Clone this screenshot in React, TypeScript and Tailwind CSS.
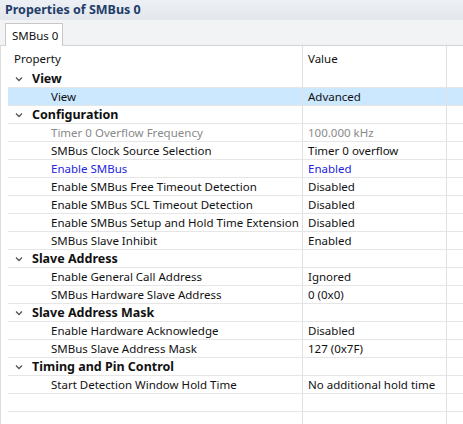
import React from "react";

type Row =
  | { kind: "cat"; label: string }
  | { kind: "item"; label: string; value: string; tone?: "gray" | "blue"; selected?: boolean }
  | { kind: "empty" };

const rows: Row[] = [
  { kind: "cat", label: "View" },
  { kind: "item", label: "View", value: "Advanced", selected: true },
  { kind: "cat", label: "Configuration" },
  { kind: "item", label: "Timer 0 Overflow Frequency", value: "100.000 kHz", tone: "gray" },
  { kind: "item", label: "SMBus Clock Source Selection", value: "Timer 0 overflow" },
  { kind: "item", label: "Enable SMBus", value: "Enabled", tone: "blue" },
  { kind: "item", label: "Enable SMBus Free Timeout Detection", value: "Disabled" },
  { kind: "item", label: "Enable SMBus SCL Timeout Detection", value: "Disabled" },
  { kind: "item", label: "Enable SMBus Setup and Hold Time Extension", value: "Disabled" },
  { kind: "item", label: "SMBus Slave Inhibit", value: "Enabled" },
  { kind: "cat", label: "Slave Address" },
  { kind: "item", label: "Enable General Call Address", value: "Ignored" },
  { kind: "item", label: "SMBus Hardware Slave Address", value: "0 (0x0)" },
  { kind: "cat", label: "Slave Address Mask" },
  { kind: "item", label: "Enable Hardware Acknowledge", value: "Disabled" },
  { kind: "item", label: "SMBus Slave Address Mask", value: "127 (0x7F)" },
  { kind: "cat", label: "Timing and Pin Control" },
  { kind: "item", label: "Start Detection Window Hold Time", value: "No additional hold time" },
  { kind: "empty" },
  { kind: "empty" },
];

function Chevron() {
  return (
    <svg width="8" height="6" viewBox="0 0 8 6" className="mr-[9px] ml-[7px] shrink-0">
      <path d="M1 1.5 L4 4.5 L7 1.5" fill="none" stroke="#555" strokeWidth="1.3" />
    </svg>
  );
}

function toneClass(t?: "gray" | "blue") {
  if (t === "gray") return "text-[#8a8a8a]";
  if (t === "blue") return "text-[#2323e0]";
  return "text-[#111]";
}

export default function App() {
  return (
    <div
      className="w-[463px] h-[424px] overflow-hidden bg-white flex flex-col text-[11.5px] leading-none"
      style={{ fontFamily: '"Noto Sans", "Open Sans", sans-serif' }}
    >
      <div className="h-[20px] shrink-0 bg-gradient-to-b from-[#edf0f4] to-[#e3e7ed] flex items-center pl-[5px] pt-[1px]">
        <span className="font-bold text-[#1f3d68] text-[12.5px]">Properties of SMBus 0</span>
      </div>
      <div className="h-[26px] shrink-0 bg-[#f2f3f5] flex items-end border-b border-[#d4d4d4] pl-[5px]">
        <div className="h-[23px] w-[58px] bg-white border border-b-0 border-[#c8c8c8] flex items-center pl-[6px] pt-[1px] -mb-px text-[#111]">
          SMBus 0
        </div>
      </div>
      <div className="flex-1 flex min-h-0 border-l border-[#dcdcdc]">
        <div className="w-[7px] shrink-0" />
        <div className="flex-1 flex flex-col min-w-0">
          <div className="h-[24px] shrink-0 grid grid-cols-[294px_144px_1fr]">
            <div className="flex items-center pl-[6px] pt-[1px] text-[#111]">Property</div>
            <div className="flex items-center pl-[5px] pt-[1px] border-l border-[#e0e0e0] text-[#111]">Value</div>
            <div className="border-l border-[#e0e0e0]" />
          </div>
          {rows.map((r, i) => {
            if (r.kind === "cat") {
              return (
                <div key={i} className="h-[18px] shrink-0 grid grid-cols-[294px_144px_1fr] border-b border-[#e6e6e6]">
                  <div className="flex items-center font-bold text-[12.5px] text-[#111] pt-[1px]">
                    <Chevron />
                    {r.label}
                  </div>
                  <div className="border-l border-[#e0e0e0]" />
                  <div className="border-l border-[#e0e0e0]" />
                </div>
              );
            }
            if (r.kind === "empty") {
              return (
                <div key={i} className="h-[18px] shrink-0 grid grid-cols-[294px_144px_1fr] border-b border-[#e6e6e6]">
                  <div />
                  <div className="border-l border-[#e0e0e0]" />
                  <div className="border-l border-[#e0e0e0]" />
                </div>
              );
            }
            return (
              <div
                key={i}
                className={`h-[18px] shrink-0 grid grid-cols-[294px_144px_1fr] border-b border-[#e6e6e6] ${r.selected ? "bg-[#cce8ff]" : ""}`}
              >
                <div className={`flex items-center pl-[43px] pt-[1px] whitespace-nowrap ${toneClass(r.tone)}`}>{r.label}</div>
                <div className={`flex items-center pl-[5px] pt-[1px] border-l border-[#e0e0e0] whitespace-nowrap ${toneClass(r.tone)}`}>
                  {r.value}
                </div>
                <div className="border-l border-[#e0e0e0]" />
              </div>
            );
          })}
        </div>
      </div>
    </div>
  );
}
